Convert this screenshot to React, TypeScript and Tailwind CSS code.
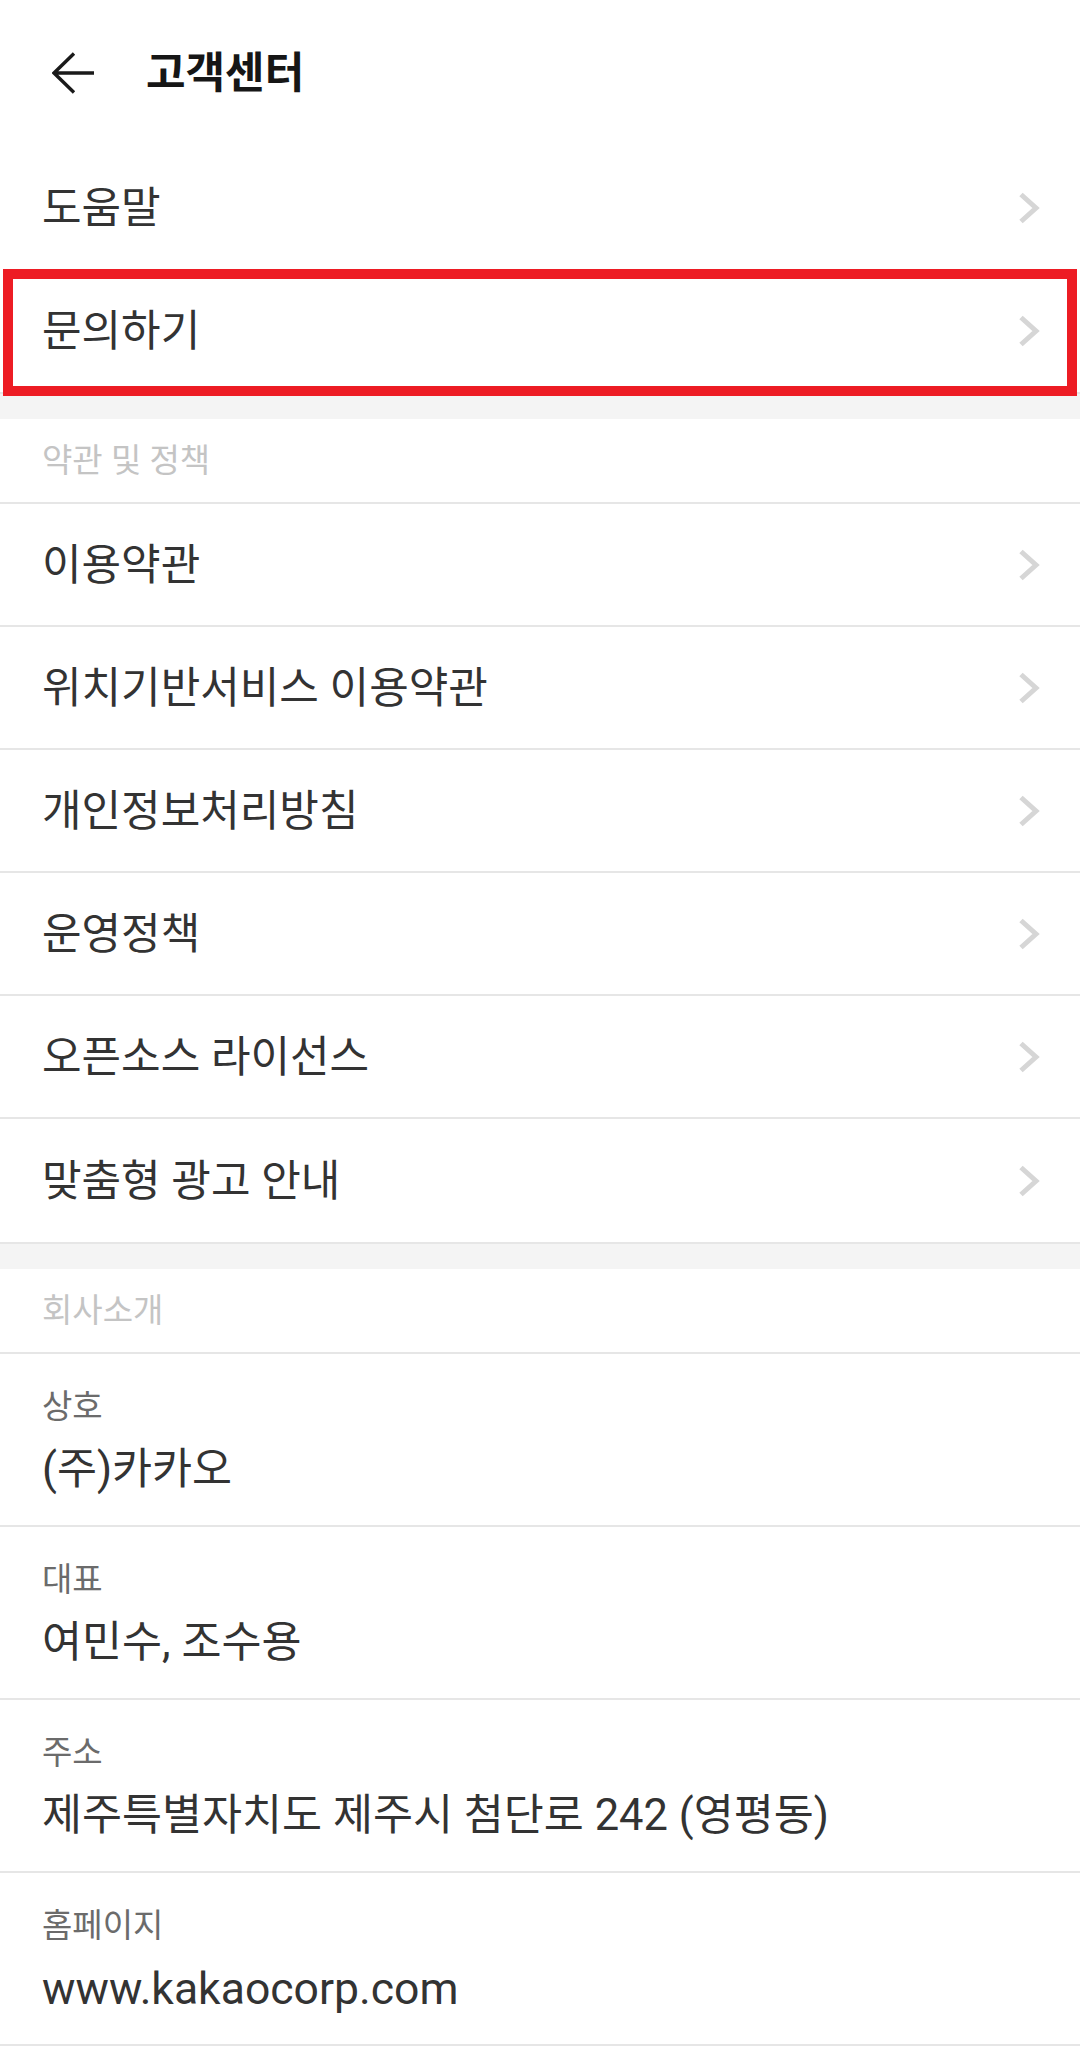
import { ReactNode } from "react";

const font = "font-['Roboto','Noto_Sans_CJK_KR',sans-serif]";

const supportItems = ["도움말", "문의하기"];
const policyItems = [
  "이용약관",
  "위치기반서비스 이용약관",
  "개인정보처리방침",
  "운영정책",
  "오픈소스 라이선스",
  "맞춤형 광고 안내",
];
const companyInfo = [
  { label: "상호", value: "(주)카카오" },
  { label: "대표", value: "여민수, 조수용" },
  { label: "주소", value: "제주특별자치도 제주시 첨단로 242 (영평동)" },
  { label: "홈페이지", value: "www.kakaocorp.com", latin: true },
];

function Chevron() {
  return (
    <svg width="22" height="32" viewBox="0 0 22 32" fill="none" className="shrink-0">
      <polyline points="3,2.5 18,16 3,29.5" stroke="#d6d6d6" strokeWidth="5" />
    </svg>
  );
}

function BackArrow() {
  return (
    <svg width="42" height="42" viewBox="0 0 42 42" fill="none" className="shrink-0">
      <path d="M2 21H42M22 1.5L2 21L22 40.5" stroke="#1a1a1a" strokeWidth="3.4" />
    </svg>
  );
}

function LinkRow({ label, children, className = "" }: { label: string; children?: ReactNode; className?: string }) {
  return (
    <div className={`relative flex items-center justify-between pl-[42px] pr-[40px] ${className}`}>
      <span className="text-[43px] leading-[52px] text-[#333333]">{label}</span>
      <Chevron />
      {children}
    </div>
  );
}

function SectionBand() {
  return <div className="h-[27px] border-t-2 border-[#e6e6e6] bg-[#f4f4f4]" />;
}

function SectionLabel({ text }: { text: string }) {
  return (
    <div className="flex h-[85px] items-center border-b-2 border-[#e6e6e6] pl-[42px]">
      <span className="text-[33px] leading-[40px] text-[#c4c4c4]">{text}</span>
    </div>
  );
}

export default function App() {
  return (
    <div className={`min-h-[2070px] w-[1080px] bg-white ${font}`}>
      <header className="flex h-[146px] items-center pl-[52px]">
        <BackArrow />
        <h1 className="ml-[52px] text-[43px] font-bold leading-[52px] text-[#161616]">고객센터</h1>
      </header>

      <div>
        <LinkRow label={supportItems[0]} className="h-[123px]" />
        <LinkRow label={supportItems[1]} className="h-[123px]">
          <span className="pointer-events-none absolute left-[3px] right-[3px] top-0 z-10 h-[127px] border-[10px] border-[#ed1c24]" />
        </LinkRow>
      </div>

      <SectionBand />
      <SectionLabel text="약관 및 정책" />
      <div className="divide-y-2 divide-[#e6e6e6]">
        {policyItems.map((item) => (
          <LinkRow key={item} label={item} className="h-[123px]" />
        ))}
      </div>

      <SectionBand />
      <SectionLabel text="회사소개" />
      <div>
        {companyInfo.map((info) => (
          <div key={info.label} className="border-b-2 border-[#e6e6e6] pl-[42px] pt-[35px] pb-[29px]">
            <div className="text-[33px] leading-[36px] text-[#6b6b6b]">{info.label}</div>
            <div
              className={`mt-[19px] leading-[52px] text-[#333333] ${info.latin ? "text-[44.5px]" : "text-[43.5px]"}`}
            >
              {info.value}
            </div>
          </div>
        ))}
      </div>
    </div>
  );
}
